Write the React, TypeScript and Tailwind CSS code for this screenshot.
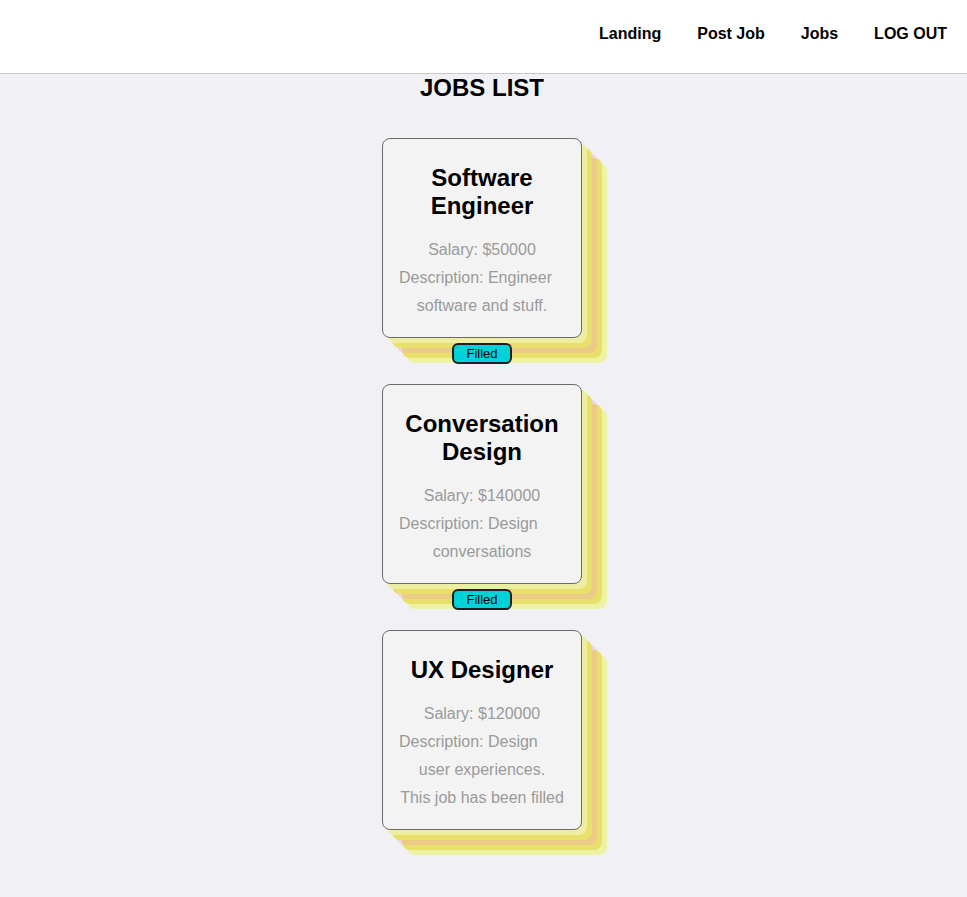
type Job = {
  title: string;
  salary: number;
  first: string;
  rest: string;
  filled: boolean;
  note?: string;
};

const jobs: Job[] = [
  { title: "Software Engineer", salary: 50000, first: "Description: Engineer", rest: "software and stuff.", filled: true },
  { title: "Conversation Design", salary: 140000, first: "Description: Design", rest: "conversations", filled: true },
  {
    title: "UX Designer",
    salary: 120000,
    first: "Description: Design",
    rest: "user experiences.",
    filled: false,
    note: "This job has been filled",
  },
];

function JobCard({ job }: { job: Job }) {
  return (
    <div className="flex flex-col items-center">
      <div className="h-[200px] w-[200px] rounded-lg border border-[#6b6b6b] bg-[#f3f3f3] px-4 pt-[25px] text-center shadow-[5px_5px_0_#eeeea2,10px_10px_0_#e9e06c,15px_15px_0_rgba(240,170,180,0.4),20px_20px_0_#e9e06c,25px_25px_0_#eef3a4]">
        <h3 className="text-2xl leading-7 font-bold text-black">{job.title}</h3>
        <div className="mt-4 text-base leading-7 text-[#9a9a9a]">
          <p>Salary: ${job.salary}</p>
          <p>
            <span className="block text-left">{job.first}</span>
            {job.rest}
          </p>
          {job.note && <p>{job.note}</p>}
        </div>
      </div>
      {job.filled && (
        <button className="mt-[5px] h-[21px] w-[60px] rounded-md border-2 border-[#1f1f1f] bg-[#00d2d8] text-[13px] leading-none text-black">
          Filled
        </button>
      )}
    </div>
  );
}

export default function App() {
  return (
    <div className="min-h-[897px] bg-[#f0f0f5] font-['Liberation_Sans',Arial,sans-serif]">
      <nav className="flex h-[74px] items-center justify-end gap-9 border-b border-[#c8c8c8] bg-white pr-5 pb-[5px] text-base font-bold text-black">
        <a>Landing</a>
        <a>Post Job</a>
        <a>Jobs</a>
        <a>LOG OUT</a>
      </nav>
      <main className="flex flex-col items-center pr-[3px] pb-10">
        <h2 className="text-2xl leading-7 font-bold text-black">JOBS LIST</h2>
        <div className="mt-9 flex flex-col items-center gap-5">
          {jobs.map((job) => (
            <JobCard key={job.title} job={job} />
          ))}
        </div>
      </main>
    </div>
  );
}
